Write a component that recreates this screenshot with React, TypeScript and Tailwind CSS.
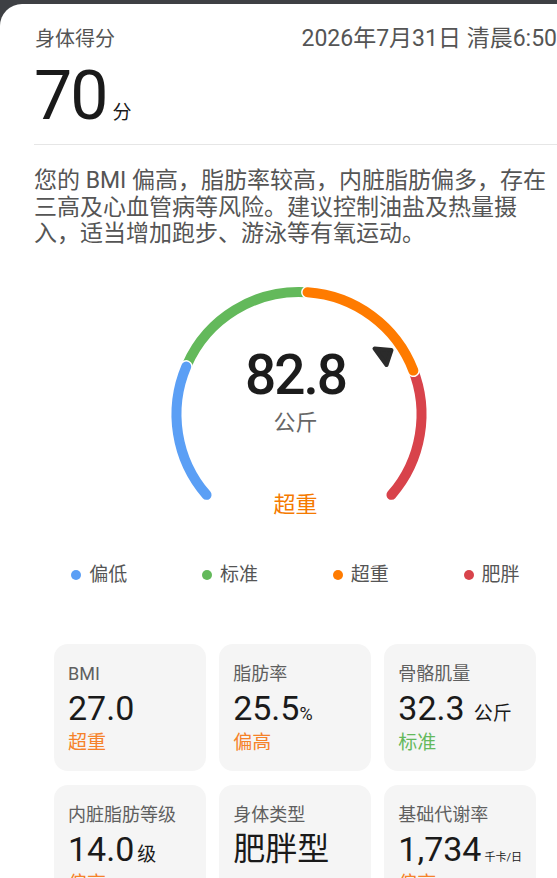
const CX = 265;
const CY = 132.5;
const R = 122.5;

function pt(a: number) {
  const r = (a * Math.PI) / 180;
  return [CX + R * Math.sin(r), CY - R * Math.cos(r)];
}

function arc(a1: number, a2: number) {
  const [x1, y1] = pt(a1);
  const [x2, y2] = pt(a2);
  return `M ${x1} ${y1} A ${R} ${R} 0 ${a2 - a1 > 180 ? 1 : 0} 1 ${x2} ${y2}`;
}

const legend = [
  { label: "偏低", dot: "bg-[#5b9ff5]" },
  { label: "标准", dot: "bg-[#63b95b]" },
  { label: "超重", dot: "bg-[#ff7b00]" },
  { label: "肥胖", dot: "bg-[#d8434b]" },
];

const cards = [
  { label: "BMI", value: "27.0", unit: "", unitClass: "", status: "超重", statusClass: "text-[#f5822a]" },
  { label: "脂肪率", value: "25.5", unit: "%", unitClass: "text-[18px]", status: "偏高", statusClass: "text-[#f5822a]" },
  { label: "骨骼肌量", value: "32.3", unit: "公斤", unitClass: "ml-[9px] text-[19px]", status: "标准", statusClass: "text-[#64b95c]" },
  { label: "内脏脂肪等级", value: "14.0", unit: "级", unitClass: "ml-[3px] text-[19px]", status: "偏高", statusClass: "text-[#f5822a]" },
  { label: "身体类型", value: "肥胖型", unit: "", unitClass: "", status: "", statusClass: "", cjk: true },
  { label: "基础代谢率", value: "1,734", unit: "千卡/日", unitClass: "ml-[3px] text-[11px]", status: "偏高", statusClass: "text-[#f5822a]" },
];

function Gauge() {
  return (
    <div className="relative mt-[34px] h-[240px]">
      <svg className="absolute inset-0" width="523" height="240" viewBox="0 0 523 240">
        <path d={arc(-66, 3)} fill="none" stroke="#63b95b" strokeWidth="10" strokeLinecap="round" />
        <path d={arc(68, 131)} fill="none" stroke="#d8434b" strokeWidth="10" strokeLinecap="round" />
        <path d={arc(-131, -67)} fill="none" stroke="#ffffff" strokeWidth="13" strokeLinecap="round" />
        <path d={arc(-131, -67)} fill="none" stroke="#5b9ff5" strokeWidth="10" strokeLinecap="round" />
        <path d={arc(4, 69)} fill="none" stroke="#ffffff" strokeWidth="13" strokeLinecap="round" />
        <path d={arc(4, 69)} fill="none" stroke="#ff7b00" strokeWidth="10" strokeLinecap="round" />
        <polygon
          points="340.5,66.5 357.5,68 352.5,83"
          fill="#2b2b2b"
          stroke="#2b2b2b"
          strokeWidth="4"
          strokeLinejoin="round"
        />
      </svg>
      <div className="relative flex flex-col items-center pt-[66px]">
        <div className="text-[55px] leading-none font-medium tracking-[-2px] text-[#1c1c1c]">82.8</div>
        <div className="mt-[9px] text-[22px] leading-none text-[#666]">公斤</div>
        <div className="mt-[60px] text-[22px] leading-none text-[#f57a00]">超重</div>
      </div>
    </div>
  );
}

export default function App() {
  return (
    <div className="h-[878px] w-[557px] overflow-hidden bg-[#3e4044] font-[Roboto,'Noto_Sans_CJK_SC',sans-serif]">
      <div className="mt-[4px] h-[874px] rounded-tl-[22px] bg-white pt-[21px] pl-[34px]">
        <div className="flex h-[28px] items-center justify-between">
          <span className="pl-[1px] text-[20px] text-[#555]">身体得分</span>
          <span className="whitespace-nowrap text-[23px] text-[#555]">2026年7月31日 清晨6:50</span>
        </div>
        <div className="mt-[7px] flex h-[72px] items-baseline">
          <span className="text-[68px] leading-[72px] tracking-[-2px] text-[#1a1a1a]">70</span>
          <span className="ml-[6px] text-[19px] text-[#1a1a1a]">分</span>
        </div>
        <div className="mt-[12px] h-px bg-[#e6e6e6]" />
        <p className="mt-[23px] text-[23px] leading-[26.5px] text-[#555]">
          您的 BMI 偏高，脂肪率较高，内脏脂肪偏多，存在三高及心血管病等风险。建议控制油盐及热量摄入，适当增加跑步、游泳等有氧运动。
        </p>
        <Gauge />
        <div className="mt-[43px] grid grid-cols-4 justify-items-center">
          {legend.map((l) => (
            <div key={l.label} className="flex h-[20px] items-center gap-[8px]">
              <span className={`size-[10px] rounded-full ${l.dot}`} />
              <span className="text-[19px] leading-none text-[#555]">{l.label}</span>
            </div>
          ))}
        </div>
        <div className="mt-[59px] mr-[21px] ml-[20px] grid grid-cols-3 gap-x-[13.5px] gap-y-[14px]">
          {cards.map((c) => (
            <div key={c.label} className="h-[127px] rounded-[14px] bg-[#f5f5f5] px-[14px] pt-[21px]">
              <div className="text-[18px] leading-none text-[#5f5f5f]">{c.label}</div>
              <div className="mt-[8px] flex h-[34px] items-baseline whitespace-nowrap text-[#1a1a1a]">
                <span className={c.cjk ? "text-[32px] leading-[34px]" : "text-[34px] leading-[34px]"}>{c.value}</span>
                {c.unit && <span className={c.unitClass}>{c.unit}</span>}
              </div>
              {c.status && <div className={`mt-[8px] text-[19px] leading-none ${c.statusClass}`}>{c.status}</div>}
            </div>
          ))}
        </div>
      </div>
    </div>
  );
}
